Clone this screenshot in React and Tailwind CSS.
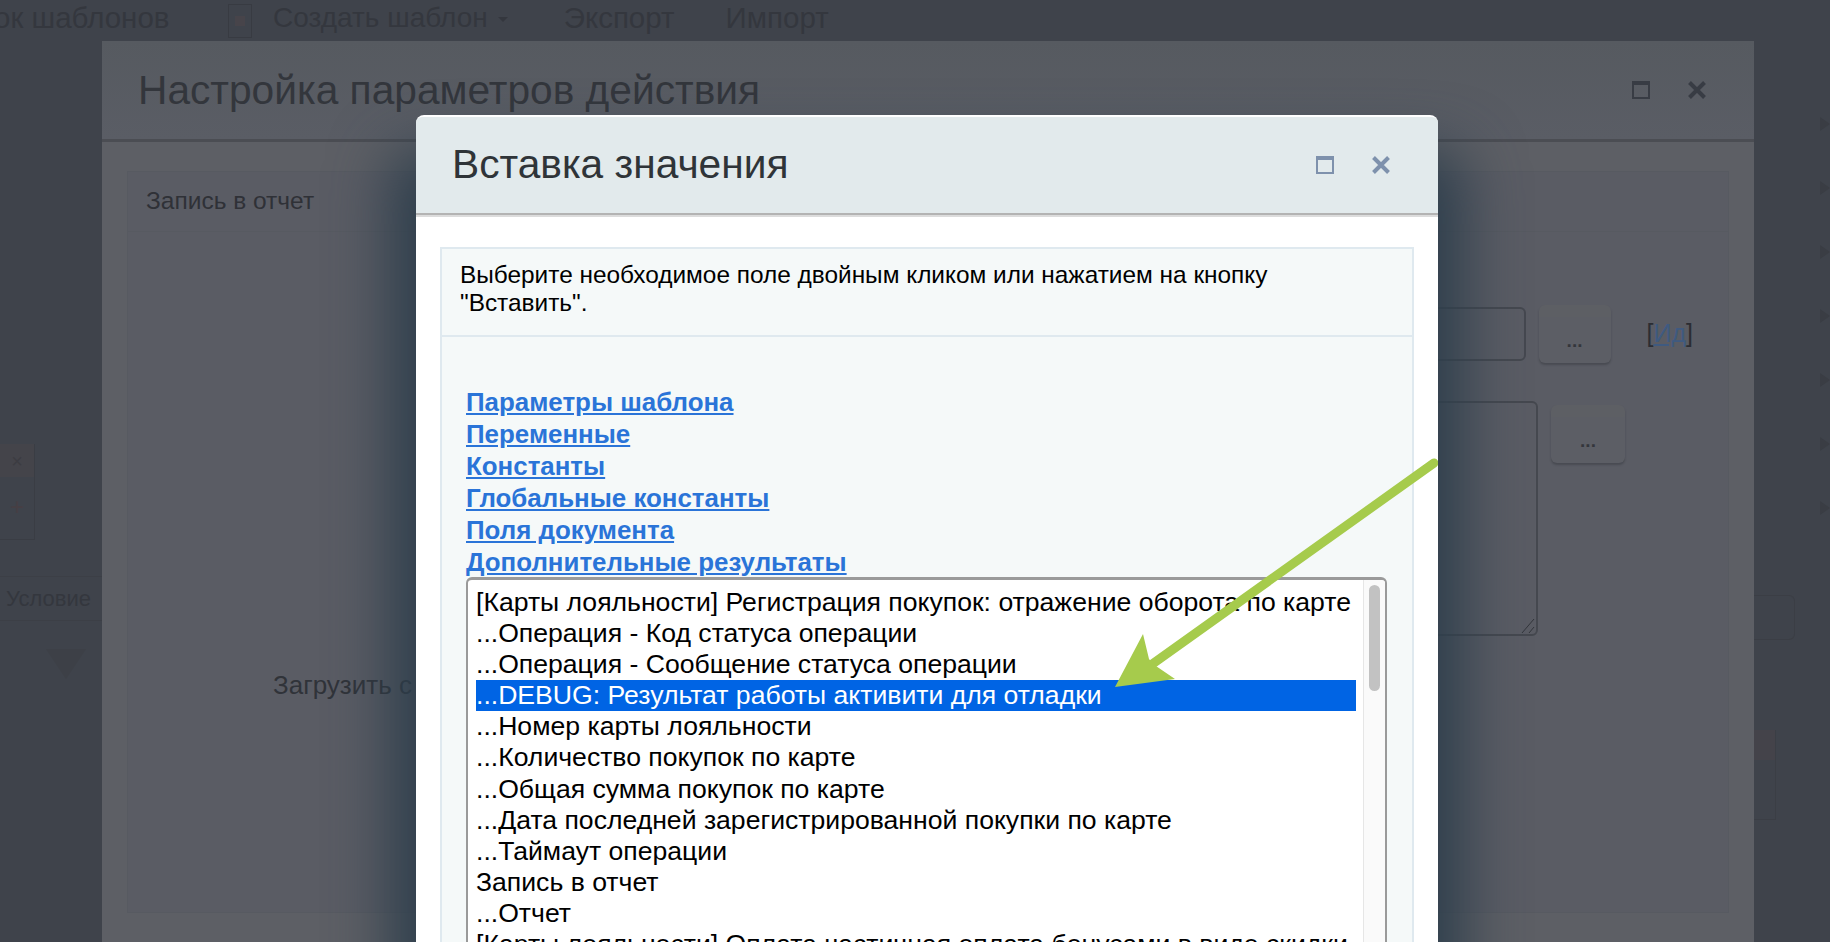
const OPTIONS = [
  "[Карты лояльности] Регистрация покупок: отражение оборота по карте",
  "...Операция - Код статуса операции",
  "...Операция - Сообщение статуса операции",
  "...DEBUG: Результат работы активити для отладки",
  "...Номер карты лояльности",
  "...Количество покупок по карте",
  "...Общая сумма покупок по карте",
  "...Дата последней зарегистрированной покупки по карте",
  "...Таймаут операции",
  "Запись в отчет",
  "...Отчет",
  "[Карты лояльности] Оплата частичная оплата бонусами в виде скидки",
];
const LINKS = ["Параметры шаблона", "Переменные", "Константы", "Глобальные константы", "Поля документа", "Дополнительные результаты"];

function WindowIcons({ color, className }) {
  return (
    <div className={`flex items-center gap-[36px] ${className}`}>
      <svg width="20" height="20" viewBox="0 0 20 20" fill="none" stroke={color}>
        <rect x="2" y="2" width="16" height="16" strokeWidth="2" />
        <rect x="1" y="1" width="18" height="4" fill={color} stroke="none" />
      </svg>
      <svg width="20" height="20" viewBox="0 0 20 20" fill="none" stroke={color} strokeWidth="4">
        <path d="M2.5 2.5L17.5 17.5M17.5 2.5L2.5 17.5" />
      </svg>
    </div>
  );
}

function Dots({ className }) {
  return (
    <div className={`flex items-center justify-center rounded-md border-t-[12px] border-[#5d5f64] bg-[#5c5e65] shadow-[0_2px_2px_rgba(40,42,48,0.35)] ${className}`}>
      <span className="text-[19px] font-bold leading-none text-[#34363c]">...</span>
    </div>
  );
}

export default function App() {
  return (
    <div className="relative h-[942px] w-full overflow-hidden bg-[#3f434b] font-['Liberation_Sans',Arial,sans-serif]">
      {/* page toolbar, dimmed */}
      <div className="flex h-[41px] items-center pb-[6px] text-[28px] leading-none text-[#34373e]">
        <span className="ml-[-6px] w-[234px] whitespace-nowrap text-[29.5px]">ок шаблонов</span>
        <div className="mt-[6px] flex h-[34px] w-[24px] items-center justify-center border border-[#383b42]">
          <div className="size-[10px] bg-[#47444a]" />
        </div>
        <span className="ml-[21px] whitespace-nowrap">Создать шаблон</span>
        <div className="ml-[10px] mt-1 border-x-[5px] border-t-[5px] border-x-transparent border-t-[#34373e]" />
        <span className="ml-[56px] whitespace-nowrap text-[29.5px]">Экспорт</span>
        <span className="ml-[51px] whitespace-nowrap text-[29.5px]">Импорт</span>
      </div>

      <div className="flex">
        {/* dimmed left column */}
        <div className="flex w-[102px] flex-col pt-[403px] text-[#34373e]">
          <div className="h-[96px] w-[35px] border-r border-b border-[#3a3d44]">
            <div className="flex h-[33px] items-center justify-center bg-[#44444a] text-[20px] text-[#3c3c42]">×</div>
            <div className="flex h-[60px] items-center justify-center text-[24px] text-[#463f44]">+</div>
          </div>
          <div className="mt-[36px] flex h-[45px] items-center border-y border-[#3c3f46] pl-[6px] text-[22px]">Условие</div>
          <div className="ml-[46px] mt-[28px] h-0 w-0 border-x-[20px] border-t-[30px] border-x-transparent border-t-[#3d4047]" />
        </div>

        {/* outer dimmed dialog */}
        <div className="h-[901px] w-[1652px] rounded-t-md bg-[#5d5f65]">
          <div className="flex h-[101px] items-center justify-between border-b-[3px] border-[#4b4d53] bg-gradient-to-b from-[#565a60] to-[#5a5d65] pl-[36px] pr-[47px]">
            <span className="text-[40.7px] leading-none text-[#33363c]">Настройка параметров действия</span>
            <WindowIcons color="#383c44" />
          </div>
          <div className="mx-[25px] mt-[29px] border border-[#575a61] bg-[#5a5c64]">
            <div className="flex h-[60px] items-center border-b border-[#575a61] pl-[18px] text-[24.5px] text-[#2f3137]">Запись в отчет</div>
            <div className="h-[680px] pl-[145px] pr-[35px] pt-[73px]">
              <div className="flex items-center">
                <div className="ml-[431px] h-[54px] flex-1 rounded-md border-2 border-[#45484f]" />
                <Dots className="ml-[13px] h-[58px] w-[72px]" />
                <span className="ml-[36px] text-[25px] text-[#2b2d33]">[<span className="text-[#3f5a80] underline">Ид</span>]</span>
              </div>
              <div className="mt-[38px] flex items-start">
                <div className="relative ml-[431px] h-[235px] w-[834px] rounded-md border-2 border-[#45484f]">
                  <svg className="absolute bottom-0 right-0" width="16" height="16" viewBox="0 0 16 16" stroke="#33363c">
                    <path d="M2 15L14 1M9 15L14 9" />
                  </svg>
                </div>
                <Dots className="ml-[13px] mt-[4px] h-[58px] w-[74px]" />
              </div>
              <p className="mt-[36px] whitespace-nowrap text-[26px] leading-none text-[#303339]">Загрузить с</p>
            </div>
          </div>
        </div>

        {/* dimmed right column */}
        <div className="flex w-[76px] flex-col items-end pt-[76px]">
          {[0, 1, 2, 3, 4, 5, 6].map((i) => (
            <div key={i} className="mb-[50px] h-0 w-0 border-y-[7px] border-l-[10px] border-y-transparent border-l-[#3a3d44]" />
          ))}
          <div className="mr-[35px] mt-[30px] h-[45px] w-[41px] rounded-r-md border-y border-r border-[#3b3e45]" />
          <div className="mr-[54px] mt-[90px] h-[90px] w-[22px] border-r border-b border-[#3b3e45]">
            <div className="h-[30px] bg-[#44434a]" />
          </div>
        </div>
      </div>

      {/* active dialog lies over the dimmed page */}
      <div className="absolute left-[416px] top-[115px] h-[827px] w-[1022px] rounded-t-lg border-t-2 border-white bg-white shadow-[0_60px_60px_25px_rgba(45,62,76,1)]">
        <div className="flex h-[96px] items-center justify-between rounded-t-md bg-[#e2eaec] pb-[2px] pl-[36px] pr-[47px]">
          <span className="text-[40.7px] leading-none text-[#2f3438]">Вставка значения</span>
          <WindowIcons color="#7e91ac" className="mt-[2px]" />
        </div>
        <div className="h-[4px] border-t-2 border-[#b3b3b3] bg-[#dcdcdc]" />
        <div className="mx-[24px] mt-[30px] border-2 border-b-0 border-[#dfe9ef] bg-[#f5f9f9]">
          <div className="h-[88px] border-b-2 border-[#dfe9ef] px-[18px] pt-[12px] text-[24.4px] leading-[28px] text-black">
            Выберите необходимое поле двойным кликом или нажатием на кнопку "Вставить".
          </div>
          <div className="h-[640px] pl-[24px] pt-[49px]">
            <div className="flex flex-col items-start text-[25.9px] font-bold leading-[32px] text-[#2a74d8]">
              {LINKS.map((l) => (
                <a key={l} href="#" className="underline">{l}</a>
              ))}
            </div>
            <div className="mt-[-1px] flex h-[400px] w-[921px] overflow-hidden rounded-t-md border-x-2 border-t-[3px] border-[#9a9a9a] bg-white">
              <ul className="flex-1 pl-[8px] pr-[7px] pt-[7px] text-[26.6px] leading-[31.1px] text-black">
                {OPTIONS.map((o, i) => (
                  <li key={o} className={`whitespace-nowrap ${i === 3 ? "bg-[#0064e4] text-white" : ""}`}>{o}</li>
                ))}
              </ul>
              <div className="w-[22px] border-l border-[#e6e6e6] bg-[#fafafa] px-[5px] pt-[5px]">
                <div className="h-[106px] rounded-full bg-[#c2c2c2]" />
              </div>
            </div>
          </div>
        </div>
        {/* annotation arrow */}
        <svg className="absolute left-0 top-0" width="1022" height="827" viewBox="0 0 1022 827" fill="#a6cb4c">
          <path d="M1018 346L735 548" stroke="#a6cb4c" strokeWidth="9" strokeLinecap="round" />
          <path d="M699 570L727 517L733 542L737 547L759 562Z" />
        </svg>
      </div>
    </div>
  );
}
